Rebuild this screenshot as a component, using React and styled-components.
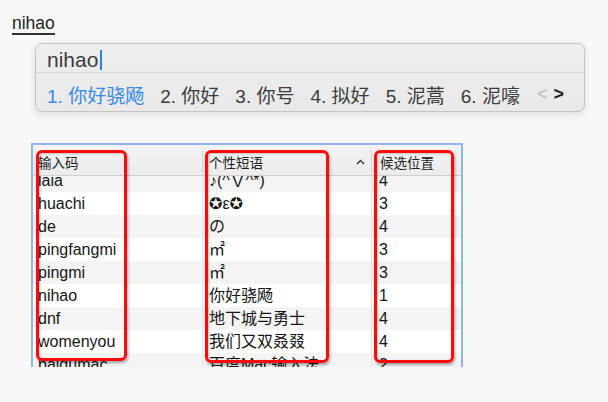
import React from 'react'
import styled, { createGlobalStyle } from 'styled-components'

const GlobalStyle = createGlobalStyle`
    body {
        margin: 0;
        background: #f8f8f8;
        font-family: "Liberation Sans", "Noto Sans CJK SC", sans-serif;
    }
`

const Page = styled.div`
    width: 608px;
    height: 402px;
    overflow: hidden;
    padding-top: 13px;
    box-sizing: border-box;
`

const Typed = styled.div`
    margin-left: 12px;
    font-size: 17.5px;
    line-height: 20px;
    color: #222;
    display: inline-block;
    border-bottom: 2px solid #333;
`

const Panel = styled.div`
    margin: 8px 0 0 35px;
    width: 550px;
    height: 69px;
    box-sizing: border-box;
    border: 1px solid #c4c4c4;
    border-radius: 7px;
    background: linear-gradient(#eeeeee, #e9e9e9);
    box-shadow: 0 2px 8px rgba(0, 0, 0, 0.12);
    display: flex;
    flex-direction: column;
`

const InputRow = styled.div`
    height: 29px;
    border-bottom: 1px solid #d6d6d6;
    display: flex;
    align-items: center;
    padding: 3px 0 0 11px;
    box-sizing: border-box;
    font-size: 21px;
    color: #3c3c3c;
`

const Caret = styled.span`
    display: inline-block;
    width: 2px;
    height: 20px;
    margin-left: 2px;
    background: #2f80e4;
`

const CandRow = styled.div`
    flex: 1;
    display: flex;
    align-items: center;
    padding: 4px 0 0 11px;
    gap: 16px;
    font-size: 19px;
`

const Cand = styled.span`
    color: ${p => (p.$active ? '#3a8ae6' : '#3c3c3c')};
    white-space: nowrap;
`

const Pager = styled.span`
    display: flex;
    gap: 6px;
    margin-left: 1px;
    align-items: center;
`

const Arrow = styled.span`
    font-size: 18px;
    color: ${p => (p.$on ? '#1c1c1c' : '#b9b9b9')};
    font-weight: ${p => (p.$on ? 700 : 400)};
`

const TableWrap = styled.div`
    position: relative;
    margin: 31px 0 0 31px;
    width: 432px;
    height: 224px;
    box-sizing: border-box;
    border: 2px solid #8fb4ee;
    border-bottom: 0;
    background: #fff;
    overflow: hidden;
`

const Grid = styled.div`
    display: grid;
    grid-template-columns: 170px 169px 1fr;
`

const Header = styled(Grid)`
    position: relative;
    z-index: 1;
    height: 31px;
    box-sizing: border-box;
    padding-top: 4px;
    background: linear-gradient(#f3f3f3, #ececec);
    border-bottom: 1px solid #cfcfcf;
    font-family: "Noto Sans CJK SC", sans-serif;
    font-size: 13.5px;
    color: #222;
`

const HeadCell = styled.div`
    display: flex;
    align-items: center;
    justify-content: space-between;
    padding: 0 6px 0 ${p => p.$pad || 5}px;
    border-right: ${p => (p.$last ? 'none' : '1px solid #d4d4d4')};
    margin: 2px 0;
`

const Body = styled.div`
    margin-top: -7px;
`

const Row = styled(Grid)`
    height: 23px;
    background: ${p => (p.$odd ? '#f4f4f4' : '#fff')};
    font-size: 16px;
    line-height: 23px;
    color: #161616;
`

const Cell = styled.div`
    padding-left: ${p => p.$pad || 5}px;
    border-right: ${p => (p.$last ? 'none' : '1px solid #e6e6e6')};
    white-space: nowrap;
    overflow: hidden;
    font-family: "Liberation Sans", "Noto Sans CJK SC", "DejaVu Sans", sans-serif;
`

const Mark = styled.div`
    position: absolute;
    z-index: 2;
    top: 5px;
    left: ${p => p.$left}px;
    width: ${p => p.$width}px;
    height: ${p => p.$height}px;
    box-sizing: border-box;
    border: 3.5px solid #ff0a0a;
    border-radius: 6px;
    box-shadow: 1px 2px 3px rgba(0, 0, 0, 0.35), inset 1px 1px 2px rgba(0, 0, 0, 0.2);
`

const SortUp = () => (
    <svg width="9" height="6" viewBox="0 0 9 6">
        <path d="M1 5 L4.5 1.5 L8 5" fill="none" stroke="#333" strokeWidth="1.3" />
    </svg>
)

const rows = [
    ['laia', '♪(^∇^*)', '4'],
    ['huachi', '✪ε✪', '3'],
    ['de', 'の', '4'],
    ['pingfangmi', '㎡', '3'],
    ['pingmi', '㎡', '3'],
    ['nihao', '你好骁飏', '1'],
    ['dnf', '地下城与勇士', '4'],
    ['womenyou', '我们又双叒叕', '4'],
    ['baidumac', '百度Mac输入法', '2'],
]

const candidates = ['你好骁飏', '你好', '你号', '拟好', '泥蒿', '泥嚎']

const App = () => {
    return (
        <Page>
            <GlobalStyle />
            <Typed>nihao</Typed>
            <Panel>
                <InputRow>
                    nihao<Caret />
                </InputRow>
                <CandRow>
                    {candidates.map((c, i) => (
                        <Cand key={c} $active={i === 0}>
                            {i + 1}. {c}
                        </Cand>
                    ))}
                    <Pager>
                        <Arrow>&lt;</Arrow>
                        <Arrow $on>&gt;</Arrow>
                    </Pager>
                </CandRow>
            </Panel>
            <TableWrap>
                <Header>
                    <HeadCell>输入码</HeadCell>
                    <HeadCell $pad={6}>
                        个性短语
                        <SortUp />
                    </HeadCell>
                    <HeadCell $pad={8} $last>候选位置</HeadCell>
                </Header>
                <Body>
                    {rows.map((r, i) => (
                        <Row key={r[0]} $odd={i % 2 === 0}>
                            <Cell>{r[0]}</Cell>
                            <Cell $pad={6}>{r[1]}</Cell>
                            <Cell $pad={7} $last>{r[2]}</Cell>
                        </Row>
                    ))}
                </Body>
                <Mark $left={3} $width={91} $height={211} />
                <Mark $left={172} $width={124} $height={213} />
                <Mark $left={341} $width={80} $height={213} />
            </TableWrap>
        </Page>
    )
}

export default App
